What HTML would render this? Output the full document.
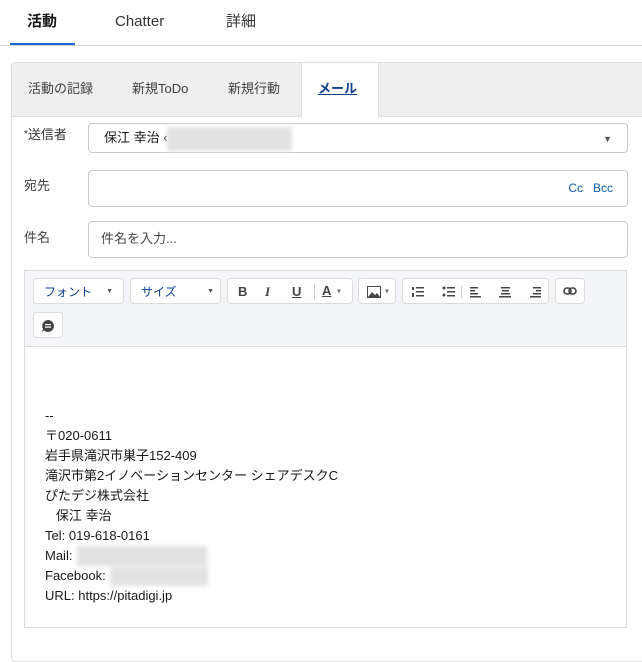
<!DOCTYPE html><html><head><meta charset="utf-8"><style>
body{margin:0;width:642px;height:648px;background:#fff;font-family:"Liberation Sans","Noto Sans CJK JP",sans-serif;color:#181818;position:relative;overflow:hidden;line-height:16px}
.a{position:absolute}
.btn{position:absolute;top:278px;height:26px;border:1px solid #dddbda;border-radius:4px;background:#fff;box-sizing:border-box}
.inp{position:absolute;left:88px;width:540px;border:1px solid #c9c9c9;border-radius:4px;box-sizing:border-box;background:#fff;font-size:13px}
.lab{position:absolute;left:24px;font-size:13px;color:#3e3e3c}
.tb{position:absolute;font-size:13px;color:#3e3e3c;top:81px}
.ic{position:absolute;font-size:13px;font-weight:bold;color:#444}
.line{position:absolute;left:45px;font-size:13px;color:#181818;white-space:pre}
.blur{position:absolute;background:#e2e2e2;filter:blur(2px)}
</style></head><body>
<div class="a" style="left:27px;top:13px;font-size:15px;font-weight:bold;line-height:18px">活動</div>
<div class="a" style="left:115px;top:13px;font-size:15px;color:#333;line-height:18px">Chatter</div>
<div class="a" style="left:226px;top:13px;font-size:15px;color:#333;line-height:18px">詳細</div>
<div class="a" style="left:0;top:45px;width:642px;height:1px;background:#d8d8d8"></div>
<div class="a" style="left:10px;top:43px;width:65px;height:2px;background:#1b6ad1"></div>
<div class="a" style="left:11px;top:62px;width:640px;height:600px;border:1px solid #dddbda;border-radius:4px;box-sizing:border-box;background:#fff"></div>
<div class="a" style="left:12px;top:63px;width:630px;height:53px;background:#f0efef;border-bottom:1px solid #dddbda"></div>
<div class="a" style="left:301px;top:63px;width:76px;height:54px;background:#fff;border-left:1px solid #dddbda;border-right:1px solid #dddbda"></div>
<div class="tb" style="left:28px">活動の記録</div>
<div class="tb" style="left:132px">新規ToDo</div>
<div class="tb" style="left:228px">新規行動</div>
<div class="tb" style="left:318px;color:#0b3f8d;font-weight:bold;text-decoration:underline">メール</div>
<div class="lab" style="top:127px;color:#333"><span style="font-size:10px;position:relative;top:-2px">*</span>送信者</div>
<div class="inp" style="top:123px;height:30px"><span style="position:absolute;left:15px;top:6px">保江 幸治 ‹</span><div class="blur" style="left:78px;top:3px;width:125px;height:24px"></div><span style="position:absolute;right:15px;top:7px;font-size:9px;color:#555">▼</span></div>
<div class="lab" style="top:178px">宛先</div>
<div class="inp" style="top:170px;height:37px"><span style="position:absolute;right:14px;top:9px;font-size:12px;color:#0b5cab">Cc&nbsp;&nbsp;&nbsp;Bcc</span></div>
<div class="lab" style="top:230px">件名</div>
<div class="inp" style="top:221px;height:37px"><span style="position:absolute;left:12px;top:9px;color:#444">件名を入力...</span></div>
<div class="a" style="left:24px;top:270px;width:603px;height:358px;border:1px solid #dddbda;box-sizing:border-box"></div>
<div class="a" style="left:25px;top:271px;width:601px;height:75px;background:#f3f5f8;border-bottom:1px solid #dddbda"></div>
<div class="btn" style="left:33px;width:91px"><span class="a" style="left:10px;top:5px;font-size:12px;color:#0b3f8d">フォント</span><span class="a" style="right:10px;top:5px;font-size:7px;color:#555">▼</span></div>
<div class="btn" style="left:130px;width:91px"><span class="a" style="left:10px;top:5px;font-size:12px;color:#0b3f8d">サイズ</span><span class="a" style="right:6px;top:5px;font-size:7px;color:#555">▼</span></div>
<div class="btn" style="left:227px;width:126px"><span class="ic" style="left:10px;top:5px">B</span><span class="ic" style="left:37px;top:5px;font-family:'Liberation Serif';font-style:italic">I</span><span class="ic" style="left:64px;top:5px;text-decoration:underline">U</span><span class="a" style="left:86px;top:5px;width:1px;height:16px;background:#ccc"></span><span class="ic" style="left:94px;top:4px;text-decoration:underline">A</span><span class="a" style="left:108px;top:5px;font-size:6px;color:#555">▼</span></div>
<div class="btn" style="left:358px;width:38px"><svg class="a" style="left:8px;top:7px" width="14" height="12"><rect x="0.5" y="0.5" width="13" height="11" fill="#fff" stroke="#444"/><path d="M1 11 L5 6 L8 9 L10 7 L13 11Z" fill="#444"/></svg><span class="a" style="left:25px;top:5px;font-size:6px;color:#555">▼</span></div>
<div class="btn" style="left:402px;width:147px"><svg class="a" style="left:8px;top:7px" width="132" height="12" fill="#444"><rect x="5" y="1" width="8" height="1.5"/><rect x="5" y="5" width="8" height="1.5"/><rect x="5" y="9" width="8" height="1.5"/><rect x="1" y="1" width="2" height="3"/><rect x="1" y="7" width="2" height="4"/><circle cx="33" cy="2" r="1.5"/><circle cx="33" cy="9" r="1.5"/><rect x="36" y="1" width="8" height="1.5"/><rect x="36" y="5" width="8" height="1.5"/><rect x="36" y="9" width="8" height="1.5"/><rect x="50" y="0" width="1" height="12" fill="#ccc"/><rect x="59" y="1" width="8" height="1.5"/><rect x="59" y="4" width="5" height="1.5"/><rect x="59" y="7" width="8" height="1.5"/><rect x="59" y="10" width="11" height="1.5"/><rect x="90" y="1" width="9" height="1.5"/><rect x="91" y="4" width="7" height="1.5"/><rect x="90" y="7" width="9" height="1.5"/><rect x="88" y="10" width="12" height="1.5"/><rect x="122" y="1" width="8" height="1.5"/><rect x="125" y="4" width="5" height="1.5"/><rect x="122" y="7" width="8" height="1.5"/><rect x="119" y="10" width="11" height="1.5"/></svg></div>
<div class="btn" style="left:555px;width:30px"><svg class="a" style="left:7px;top:8px" width="14" height="8"><rect x="1" y="1" width="7" height="6" rx="3" fill="none" stroke="#444" stroke-width="1.6"/><rect x="6" y="1" width="7" height="6" rx="3" fill="none" stroke="#444" stroke-width="1.6"/></svg></div>
<div class="btn" style="left:33px;top:312px;width:30px"><svg class="a" style="left:7px;top:6px" width="14" height="14"><path d="M7 1a6 6 0 1 1-4 10.5L1 13l1-3A6 6 0 0 1 7 1z" fill="#444"/><rect x="4" y="5" width="6" height="1.2" fill="#fff"/><rect x="4" y="7.5" width="6" height="1.2" fill="#fff"/></svg></div>
<div class="line" style="top:408px">--</div>
<div class="line" style="top:428px">〒020-0611</div>
<div class="line" style="top:448px">岩手県滝沢市巣子152-409</div>
<div class="line" style="top:468px">滝沢市第2イノベーションセンター シェアデスクC</div>
<div class="line" style="top:488px">ぴたデジ株式会社</div>
<div class="line" style="top:508px">   保江 幸治</div>
<div class="line" style="top:528px">Tel: 019-618-0161</div>
<div class="line" style="top:548px">Mail:</div>
<div class="blur" style="left:77px;top:546px;width:130px;height:20px"></div>
<div class="line" style="top:568px">Facebook:</div>
<div class="blur" style="left:110px;top:566px;width:98px;height:20px"></div>
<div class="line" style="top:588px">URL: https://pitadigi.jp</div>
</body></html>
